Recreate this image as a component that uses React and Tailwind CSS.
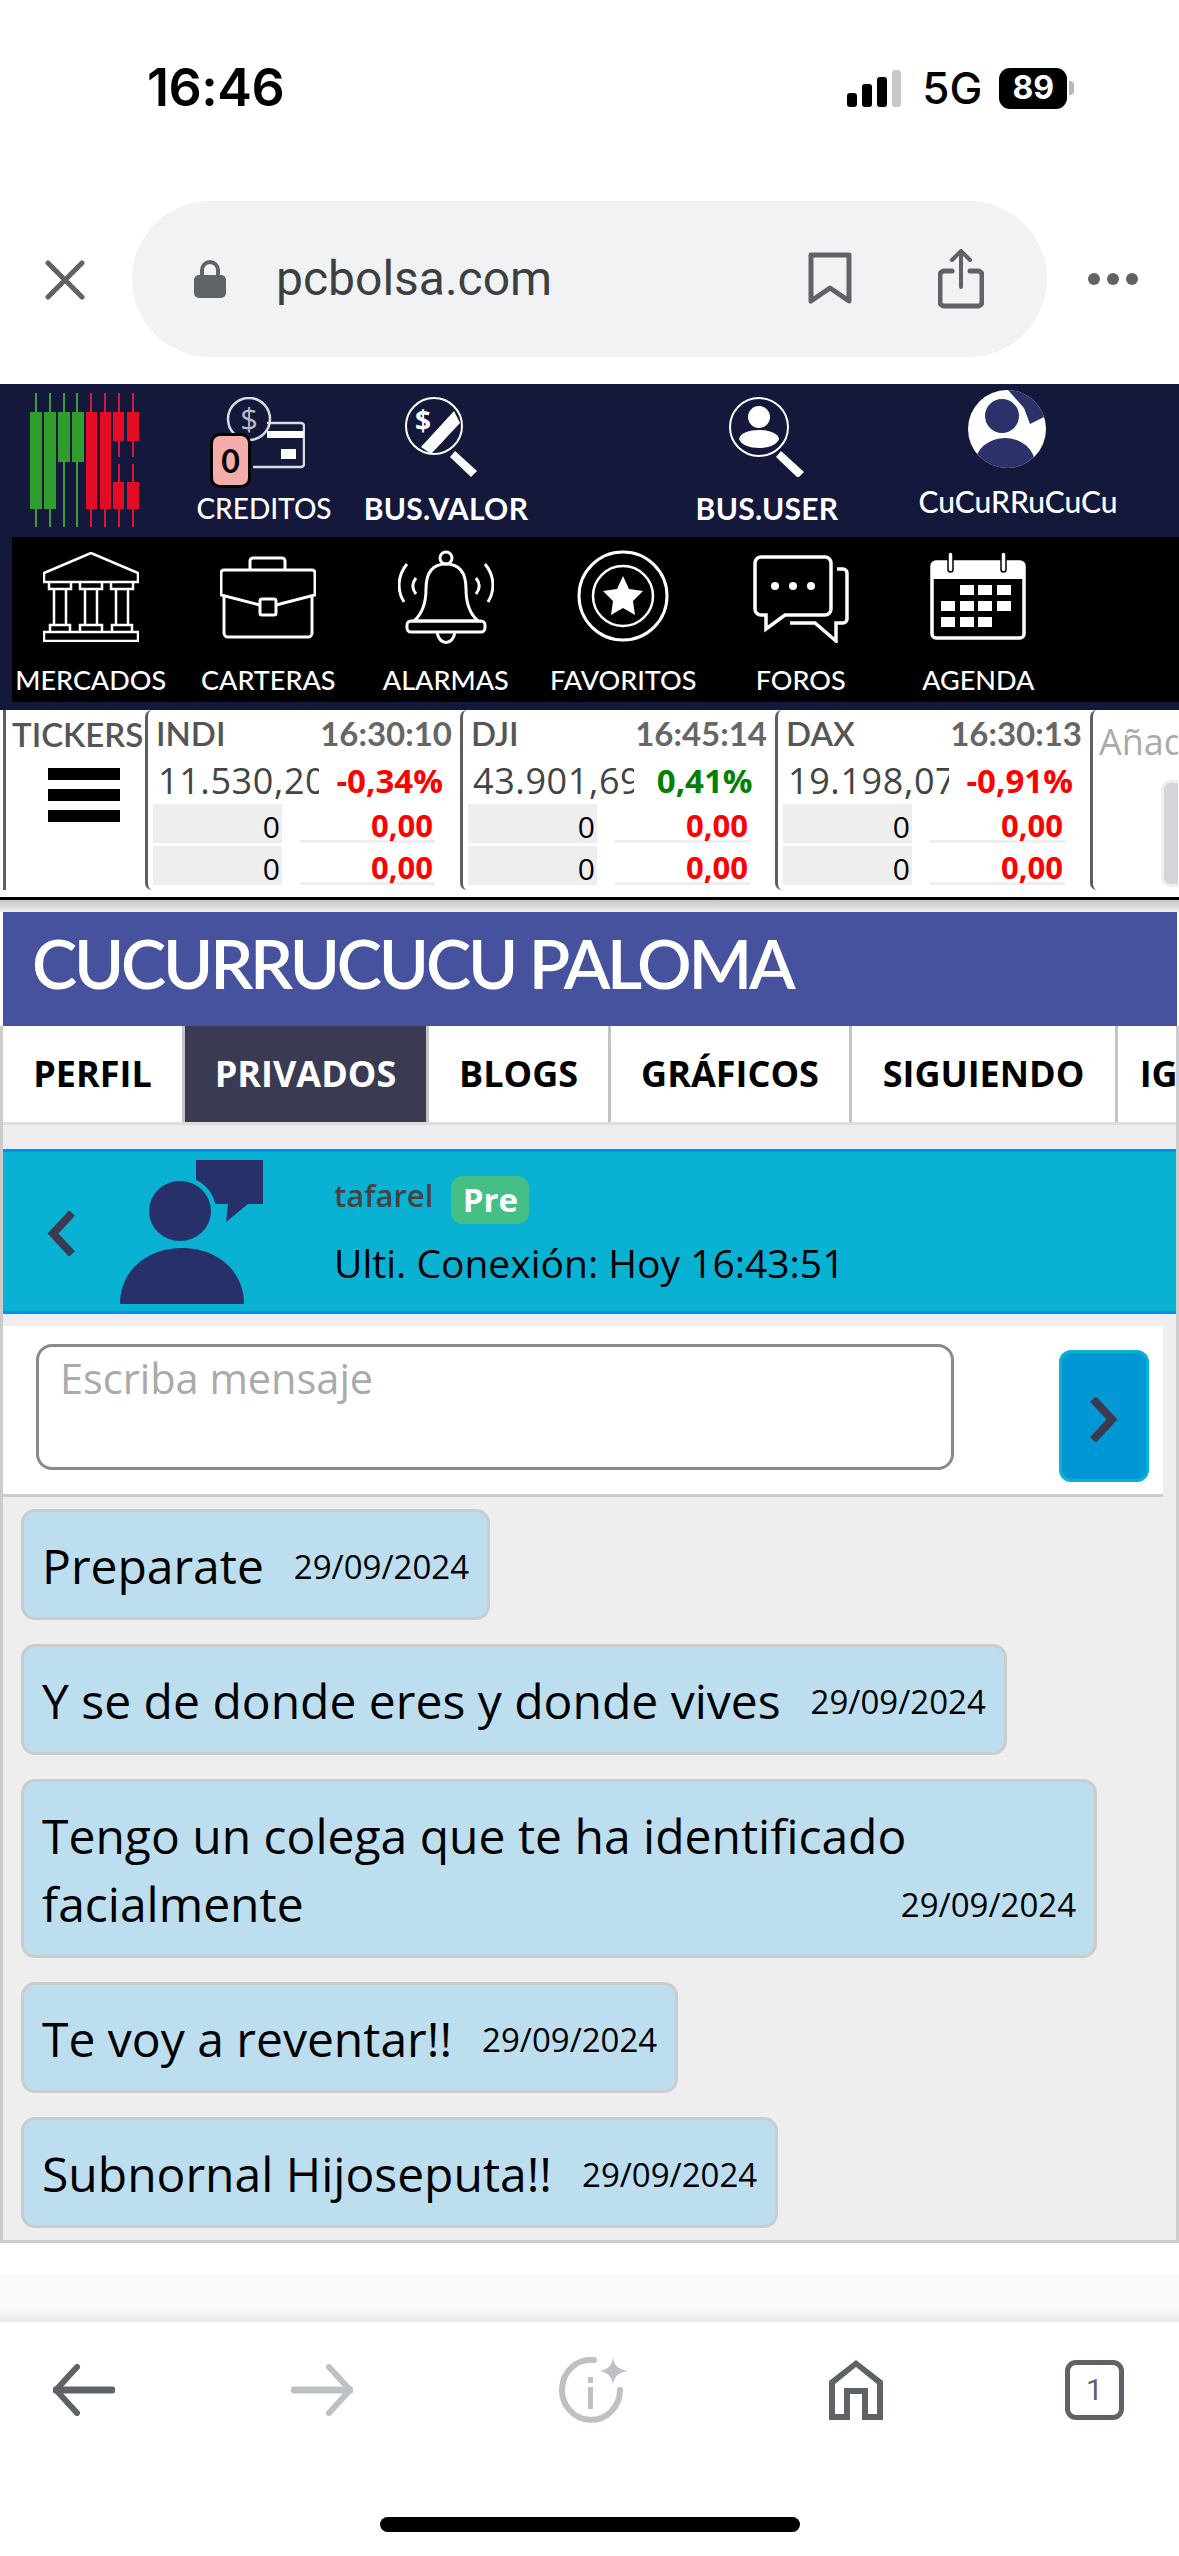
import React from 'react';

const open = "font-['Open_Sans',sans-serif]";
const lato = "font-['Lato',sans-serif]";

const Logo = () => (
  <svg width="109" height="134" viewBox="0 0 109 134" className="shrink-0">
    {[6, 20, 34, 47].map((x) => <rect key={x} x={x - 1} y="0" width="2" height="134" fill="#3f9a3f" />)}
    {[61, 75, 89, 103].map((x) => <rect key={x} x={x - 1} y="0" width="2" height="134" fill="#d8153a" />)}
    <rect x="0" y="19" width="12" height="97" fill="#2f9e2f" />
    <rect x="14" y="19" width="12" height="97" fill="#2f9e2f" />
    <rect x="28" y="19" width="12" height="50" fill="#2f9e2f" />
    <rect x="42" y="19" width="12" height="50" fill="#2f9e2f" />
    <rect x="56" y="19" width="11" height="97" fill="#e40b24" />
    <rect x="70" y="19" width="11" height="97" fill="#e40b24" />
    <rect x="83" y="19" width="11" height="29" fill="#e40b24" />
    <rect x="97" y="19" width="12" height="29" fill="#e40b24" />
    <rect x="83" y="64" width="26" height="7" fill="#14183a" />
    <rect x="83" y="89" width="11" height="27" fill="#e40b24" />
    <rect x="97" y="89" width="12" height="27" fill="#e40b24" />
  </svg>
);

const CreditIcon = () => (
  <div className="relative w-[82px] h-[90px]">
    <svg width="82" height="90" viewBox="0 0 82 90" fill="none" stroke="#d9dbe2" strokeWidth="2.5">
      <circle cx="26" cy="22" r="21" />
      <text x="26" y="33" textAnchor="middle" fill="#b9bcc8" stroke="none" fontSize="31" fontFamily="Open Sans">$</text>
      <path d="M44 26H78a3 3 0 0 1 3 3V67a3 3 0 0 1-3 3H30" />
      <rect x="44" y="34" width="37" height="7" fill="#fff" stroke="none" />
      <rect x="58" y="52" width="15" height="10" fill="#fff" stroke="none" />
    </svg>
    <div className={`absolute left-[-13px] top-[36px] w-[41px] h-[55px] rounded-[10px] border-[3px] border-black bg-[#f4acac] text-black font-bold text-[32px] flex items-center justify-center ${lato}`}>0</div>
  </div>
);

const ValorIcon = () => (
  <svg width="76" height="80" viewBox="0 0 76 80" fill="none">
    <circle cx="29" cy="29" r="28" stroke="#fff" strokeWidth="2" />
    <path d="M16 50 L49 14 L55 26 L26 57 Z" fill="#fff" />
    <path d="M50 54 L72 74 L66 80 L45 60 Z" fill="#fff" />
    <text x="18" y="34" textAnchor="middle" fill="#fff" fontSize="28" fontWeight="700" fontFamily="Open Sans">$</text>
  </svg>
);

const UserSearchIcon = () => (
  <svg width="76" height="80" viewBox="0 0 76 80" fill="none">
    <circle cx="30" cy="30" r="29" stroke="#fff" strokeWidth="2" />
    <circle cx="30" cy="20" r="11" fill="#fff" />
    <path d="M10 42 C12 30 48 30 50 42 C46 54 14 54 10 42 Z" fill="#fff" />
    <path d="M52 54 L75 75 L69 81 L47 60 Z" fill="#fff" />
  </svg>
);

const ProfileBubble = () => (
  <svg width="78" height="78" viewBox="0 0 78 78">
    <defs>
      <clipPath id="round"><ellipse cx="39" cy="39" rx="39" ry="39" /></clipPath>
    </defs>
    <g clipPath="url(#round)">
      <rect width="78" height="78" fill="#fff" />
      <path d="M40 0H78V26L62 34L56 18Z" fill="#2b3269" />
      <circle cx="34" cy="26" r="17" fill="#2b3269" />
      <ellipse cx="37" cy="74" rx="30" ry="26" fill="#2b3269" />
    </g>
  </svg>
);

const Mercados = () => (
  <svg width="96" height="90" viewBox="0 0 96 90" fill="none" stroke="#fff" strokeWidth="2.5">
    <path d="M48 1 L95 21 V30 H1 V21 Z" />
    <path d="M6 30V37H28V30M37 30V37H59V30M68 30V37H90V30" />
    <path d="M11 37V73M23 37V73M42 37V73M54 37V73M73 37V73M85 37V73" />
    <path d="M7 80V73H27V80M37 80V73H59V80M69 80V73H89V80" />
    <rect x="1" y="80" width="94" height="9" />
  </svg>
);

const Carteras = () => (
  <svg width="96" height="84" viewBox="0 0 96 84" fill="none" stroke="#fff" strokeWidth="3">
    <path d="M30 15V6a3 3 0 0 1 3-3H62a3 3 0 0 1 3 3V15" />
    <path d="M4 15H92a3 3 0 0 1 3 3V40L56 50M40 50L1 40V18a3 3 0 0 1 3-3" />
    <rect x="40" y="44" width="16" height="16" rx="2" />
    <path d="M4 42V78a4 4 0 0 0 4 4H88a4 4 0 0 0 4-4V42" />
  </svg>
);

const Alarmas = () => (
  <svg width="96" height="96" viewBox="0 0 96 96" fill="none" stroke="#fff" strokeWidth="3">
    <circle cx="48" cy="9" r="6" />
    <path d="M48 15C30 15 28 30 28 40C28 55 24 65 16 72H80C72 65 68 55 68 40C68 30 66 15 48 15Z" />
    <rect x="9" y="72" width="78" height="11" rx="4" />
    <path d="M39 83C41 97 55 97 57 83" />
    <path d="M9 15C-1 27 -1 42 6 53M18 29C14 34 14 40 18 45M87 15C97 27 97 42 90 53M78 29C82 34 82 40 78 45" />
  </svg>
);

const Favoritos = () => (
  <svg width="92" height="92" viewBox="0 0 92 92" fill="none" stroke="#fff">
    <circle cx="46" cy="46" r="44" strokeWidth="3" />
    <circle cx="46" cy="46" r="30" strokeWidth="2.5" />
    <path d="M46 26 L52 39 L66 41 L56 51 L58 65 L46 58 L34 65 L36 51 L26 41 L40 39 Z" fill="#fff" stroke="none" />
  </svg>
);

const Foros = () => (
  <svg width="96" height="88" viewBox="0 0 96 88" fill="none" stroke="#fff" strokeWidth="3.5">
    <path d="M8 2H72a6 6 0 0 1 6 6V54a6 6 0 0 1-6 6H32L13 74V60H8a6 6 0 0 1-6-6V8a6 6 0 0 1 6-6Z" />
    <path d="M84 14H90a4 4 0 0 1 4 4V64a4 4 0 0 1-4 4H83V86L62 68H37" />
    <circle cx="22" cy="31" r="4" fill="#fff" stroke="none" />
    <circle cx="40" cy="31" r="4" fill="#fff" stroke="none" />
    <circle cx="58" cy="31" r="4" fill="#fff" stroke="none" />
  </svg>
);

const Agenda = () => (
  <svg width="96" height="88" viewBox="0 0 96 88" fill="none">
    <rect x="2" y="10" width="92" height="76" rx="4" stroke="#fff" strokeWidth="3.5" />
    <rect x="2" y="10" width="92" height="17" fill="#fff" />
    <rect x="18" y="0" width="5" height="20" rx="2.5" fill="#fff" stroke="#000" strokeWidth="1.5" />
    <rect x="71" y="0" width="5" height="20" rx="2.5" fill="#fff" stroke="#000" strokeWidth="1.5" />
    {[30, 48, 67].map((x) => <rect key={x} x={x + 0} y="33" width="14" height="10" fill="#fff" />)}
    {[11, 30, 48, 67].map((x) => <rect key={x} x={x} y="49" width="14" height="10" fill="#fff" />)}
    {[11, 30, 48].map((x) => <rect key={x} x={x} y="65" width="14" height="10" fill="#fff" />)}
  </svg>
);

const ChatAvatar = () => (
  <svg width="143" height="144" viewBox="0 0 143 144" className="shrink-0">
    <path d="M76 0H143V44H128L106 62L108 44H76Z" fill="#283069" />
    <ellipse cx="60" cy="51" rx="36" ry="35" fill="#09b2d2" />
    <ellipse cx="60" cy="51" rx="31" ry="30" fill="#283069" />
    <path d="M0 144C0 110 28 88 62 88C96 88 124 110 124 144Z" fill="#283069" />
  </svg>
);

const StatusBar = () => (
  <div className="h-[201px] shrink-0">
    <div className="flex items-center h-[118px] pt-[58px] pl-[147px]">
      <span className="text-[52px] font-semibold text-black font-['Inter',sans-serif] tracking-[-0.5px] leading-none">16:46</span>
      <div className="ml-[563px] flex items-end gap-[5px] h-[37px] w-[59px]">
        <span className="w-[10px] h-[14px] rounded-[3px] bg-black" />
        <span className="w-[10px] h-[23px] rounded-[3px] bg-black" />
        <span className="w-[10px] h-[30px] rounded-[3px] bg-black" />
        <span className="w-[9px] h-[37px] rounded-[3px] bg-[#c8c8c8]" />
      </div>
      <span className="ml-[16px] text-[44px] font-medium text-black font-['Inter',sans-serif] leading-none">5G</span>
      <div className="ml-[17px] flex items-center">
        <div className="w-[68px] h-[41px] rounded-[11px] bg-black flex items-center justify-center text-white font-bold text-[32px] font-['Inter',sans-serif] leading-none">89</div>
        <span className="w-[5px] h-[14px] ml-[2px] rounded-r-[4px] bg-[#b8b8b8]" />
      </div>
    </div>
  </div>
);

const UrlBar = () => (
  <div className="flex items-start h-[183px] shrink-0">
    <svg width="40" height="40" viewBox="0 0 40 40" className="ml-[45px] mt-[59px] shrink-0" stroke="#5f6368" strokeWidth="5" strokeLinecap="round">
      <path d="M3 3L37 37M37 3L3 37" />
    </svg>
    <div className="ml-[47px] w-[915px] h-[156px] rounded-full bg-[#f1f2f4] flex items-center shrink-0">
      <svg width="32" height="38" viewBox="0 0 32 38" className="ml-[62px] shrink-0">
        <path d="M8 17V10a8 8 0 0 1 16 0V17" fill="none" stroke="#5f6368" strokeWidth="4" />
        <rect x="0" y="15" width="32" height="23" rx="5" fill="#5f6368" />
      </svg>
      <span className="ml-[50px] text-[48px] text-[#3c4043] font-['Roboto',sans-serif] leading-none">pcbolsa.com</span>
      <svg width="44" height="54" viewBox="0 0 44 54" className="ml-[256px] shrink-0" fill="none" stroke="#5f6368" strokeWidth="5">
        <path d="M3 3H41V49L22 36L3 49Z" strokeLinejoin="round" />
      </svg>
      <svg width="46" height="60" viewBox="0 0 46 60" className="ml-[86px] shrink-0" fill="none" stroke="#5f6368" strokeWidth="5" strokeLinecap="round">
        <path d="M14 22H6a4 4 0 0 0-4 4V53a4 4 0 0 0 4 4H40a4 4 0 0 0 4-4V26a4 4 0 0 0-4-4H32" />
        <path d="M23 38V3M14 11L23 2L32 11" strokeWidth="4" />
      </svg>
    </div>
    <div className="ml-[41px] mt-[72px] flex gap-[7px]">
      <span className="w-[12px] h-[12px] rounded-full bg-[#5f6368]" />
      <span className="w-[12px] h-[12px] rounded-full bg-[#5f6368]" />
      <span className="w-[12px] h-[12px] rounded-full bg-[#5f6368]" />
    </div>
  </div>
);

const TopNav = () => (
  <div className={`bg-[#14183a] h-[153px] flex items-start shrink-0 ${lato}`}>
    <div className="ml-[30px] mt-[9px] shrink-0"><Logo /></div>
    <div className="ml-[40px] w-[170px] shrink-0 flex flex-col items-center pt-[13px]">
      <div className="h-[95px]"><CreditIcon /></div>
      <span className="text-[28px] leading-[32px] text-white font-medium">CREDITOS</span>
    </div>
    <div className="ml-[12px] w-[170px] shrink-0 flex flex-col items-center pt-[13px]">
      <div className="h-[95px] pr-[6px]"><ValorIcon /></div>
      <span className="text-[30px] leading-[32px] text-white font-bold tracking-[0.3px]">BUS.VALOR</span>
    </div>
    <div className="ml-[151px] w-[170px] shrink-0 flex flex-col items-center pt-[13px]">
      <div className="h-[95px]"><UserSearchIcon /></div>
      <span className="text-[30px] leading-[32px] text-white font-bold tracking-[0.3px]">BUS.USER</span>
    </div>
    <div className="ml-[56px] w-[220px] shrink-0 flex flex-col items-center pt-[5px]">
      <div className="h-[96px] pr-[22px] pt-[1px]"><ProfileBubble /></div>
      <span className="text-[30px] leading-[32px] text-white font-medium">CuCuRRuCuCu</span>
    </div>
  </div>
);

const menuItems = [
  { label: 'MERCADOS', Icon: Mercados, top: 'pt-[15px]' },
  { label: 'CARTERAS', Icon: Carteras, top: 'pt-[18px]' },
  { label: 'ALARMAS', Icon: Alarmas, top: 'pt-[12px]' },
  { label: 'FAVORITOS', Icon: Favoritos, top: 'pt-[13px]' },
  { label: 'FOROS', Icon: Foros, top: 'pt-[18px]' },
  { label: 'AGENDA', Icon: Agenda, top: 'pt-[15px]' },
];

const MainMenu = () => (
  <div className="bg-[#14183a] h-[173px] pl-[12px] pb-[8px] shrink-0">
    <div className={`bg-black h-[165px] flex overflow-hidden ${lato}`}>
      <div className="flex -ml-[10px]">
        {menuItems.map(({ label, Icon, top }) => (
          <div key={label} className="w-[177.5px] relative flex justify-center shrink-0">
            <div className={top}><Icon /></div>
            <span className="absolute left-0 right-0 top-[127px] text-center text-[27px] leading-[32px] text-white font-medium">{label}</span>
          </div>
        ))}
      </div>
    </div>
  </div>
);

const tickers = [
  { name: 'INDI', time: '16:30:10', price: '11.530,20', pct: '-0,34%', up: false },
  { name: 'DJI', time: '16:45:14', price: '43.901,69', pct: '0,41%', up: true },
  { name: 'DAX', time: '16:30:13', price: '19.198,07', pct: '-0,91%', up: false },
];

const TickerRow = () => (
  <div className="h-[39px] flex mb-[3px]">
    <div className="ml-[5px] w-[129px] bg-[#eeeeee] text-right text-[30px] leading-[45px] pr-[2px] text-black">0</div>
    <div className="ml-[18px] w-[135px] border-b-[3px] border-[#eeeeee] text-right text-[31px] leading-[42px] pr-[2px] font-bold text-[#ff0000]">0,00</div>
  </div>
);

const TickerCard = ({ name, time, price, pct, up }) => (
  <div className={`w-[315px] h-[180px] shrink-0 border-l-[3px] border-[#5f5f5f] rounded-l-[7px] ${open}`}>
    <div className="h-[48px] flex justify-between items-center pl-[8px] pr-[8px]">
      <span className={`text-[33px] font-semibold text-[#555] ${lato}`}>{name}</span>
      <span className={`text-[33px] font-bold text-[#666] ${lato}`}>{time}</span>
    </div>
    <div className="h-[46px] flex items-center">
      <div className="ml-[10px] w-[163px] overflow-hidden whitespace-nowrap text-[36px] tracking-[0.6px] text-[#444] leading-[44px]">{price}</div>
      <div className={`w-[142px] text-center text-[33px] font-bold leading-[44px] ${up ? 'text-[#008000]' : 'text-[#ff0000]'}`}>{pct}</div>
    </div>
    <TickerRow />
    <TickerRow />
  </div>
);

const Tickers = () => (
  <div className="h-[190px] bg-white border-b-[3px] border-black flex overflow-hidden shrink-0">
    <div className={`ml-[3px] w-[142px] h-[180px] shrink-0 border-l-[3px] border-[#5f5f5f] ${lato}`}>
      <div className="pl-[6px] pt-[4px] text-[33px] leading-[40px] font-semibold text-[#555] whitespace-nowrap">TICKERS</div>
      <div className="ml-[42px] mt-[14px] w-[72px] flex flex-col gap-[9px]">
        <span className="h-[12px] bg-black" />
        <span className="h-[12px] bg-black" />
        <span className="h-[12px] bg-black" />
      </div>
    </div>
    {tickers.map((t) => <TickerCard key={t.name} {...t} />)}
    <div className="h-[180px] shrink-0 border-l-[3px] border-[#5f5f5f] rounded-l-[7px] w-[88px] overflow-hidden">
      <div className={`pl-[6px] pt-[10px] text-[36px] leading-[44px] text-[#aaaaaa] whitespace-nowrap ${open}`}>Añadir</div>
      <div className="ml-[68px] mt-[16px] w-[40px] h-[107px] rounded-[10px] bg-[#d4d5da] border-[3px] border-[#eeeeee]" />
    </div>
  </div>
);

const tabs = [
  { label: 'PERFIL', width: 'w-[182px]' },
  { label: 'PRIVADOS', width: 'w-[244px]', active: true },
  { label: 'BLOGS', width: 'w-[182px]' },
  { label: 'GRÁFICOS', width: 'w-[241px]' },
  { label: 'SIGUIENDO', width: 'w-[266px]' },
  { label: 'IGNORADOS', width: 'w-[266px]' },
];

const Tabs = () => (
  <div className="h-[99px] flex overflow-hidden border-b-[3px] border-[#dddddd] bg-white shrink-0">
    {tabs.map((t) => (
      <div
        key={t.label}
        className={`${t.width} shrink-0 h-full flex items-center justify-center border-r-[3px] border-[#c4c4c4] text-[36px] font-bold whitespace-nowrap ${open} ${t.active ? 'bg-[#3a3a52] text-white' : 'text-black'}`}
      >
        {t.label}
      </div>
    ))}
  </div>
);

const ChatHeader = () => (
  <div className="h-[165px] bg-[#09b2d2] border-y-[3px] border-[#0090f8] flex items-center shrink-0">
    <svg width="28" height="45" viewBox="0 0 28 45" className="ml-[44px] mt-[3px] shrink-0" fill="none" stroke="#3a3a52" strokeWidth="8">
      <path d="M25 2L6 22.5L25 43" />
    </svg>
    <div className="ml-[45px]"><ChatAvatar /></div>
    <div className={`ml-[71px] flex flex-col ${open}`}>
      <div className="flex items-center h-[48px]">
        <span className="text-[31px] font-semibold text-[#444] -mt-[8px]">tafarel</span>
        <span className="ml-[18px] w-[78px] h-[48px] rounded-[12px] bg-[#45bf85] text-white font-bold text-[33px] flex items-center justify-center">Pre</span>
      </div>
      <div className="mt-[14px] text-[39px] leading-[50px] text-black whitespace-nowrap">Ulti. Conexión: Hoy 16:43:51</div>
    </div>
  </div>
);

const MessageBox = () => (
  <div className="w-[1160px] h-[171px] bg-white border-b-[3px] border-[#cccccc] flex items-start shrink-0">
    <div className={`ml-[33px] mt-[18px] w-[918px] h-[126px] rounded-[16px] border-[3px] border-[#8a8a8e] bg-white pl-[21px] pt-[6px] text-[41.5px] leading-[50px] text-[#aaaaaa] ${open}`}>
      Escriba mensaje
    </div>
    <div className="ml-[105px] mt-[24px] w-[90px] h-[132px] rounded-[12px] bg-[#0097d4] border-[3px] border-[#09b2d2] flex items-center justify-center shrink-0">
      <svg width="28" height="45" viewBox="0 0 28 45" className="mt-[6px]" fill="none" stroke="#3a3a52" strokeWidth="8">
        <path d="M3 2L22 22.5L3 43" />
      </svg>
    </div>
  </div>
);

const messages = [
  'Preparate',
  'Y se de donde eres y donde vives',
  'Tengo un colega que te ha identificado facialmente',
  'Te voy a reventar!!',
  'Subnornal Hijoseputa!!',
];

const Bubble = ({ text }) => (
  <div className={`w-fit max-w-[1076px] bg-[#bcdeee] border-[3px] border-[#cccccc] rounded-[14px] px-[18px] pt-[20px] pb-[16px] text-black ${open}`}>
    <span className="text-[48px] leading-[68px]">{text}</span>
    <span className="float-right ml-[30px] mt-[1px] text-[33px] leading-[68px]">29/09/2024</span>
  </div>
);

const Messages = () => (
  <div className="h-[746px] border-b-[3px] border-[#cccccc] pl-[18px] pt-[12px] flex flex-col gap-[24px] shrink-0">
    {messages.map((m) => <Bubble key={m} text={m} />)}
  </div>
);

const BottomBar = () => (
  <div className="flex-1 bg-white">
    <div className="h-[31px]" />
    <div className="h-[48px] bg-gradient-to-b from-[#fafafa] from-70% to-[#e9e9e9]" />
    <div className="h-[234px]">
      <div className="flex items-center h-[136px]">
        <svg width="62" height="52" viewBox="0 0 62 52" className="ml-[53px] shrink-0" fill="none" stroke="#5f6368" strokeLinecap="round" strokeLinejoin="round">
          <path d="M3 26H59" strokeWidth="7" />
          <path d="M24 3L3 26L24 49" strokeWidth="6" />
        </svg>
        <svg width="62" height="52" viewBox="0 0 62 52" className="ml-[176px] shrink-0" fill="none" stroke="#bdc1c6" strokeLinecap="round" strokeLinejoin="round">
          <path d="M3 26H59" strokeWidth="7" />
          <path d="M38 3L59 26L38 49" strokeWidth="6" />
        </svg>
        <svg width="70" height="66" viewBox="0 0 70 66" className="ml-[205px] shrink-0" fill="none">
          <path d="M36 3A29 30 0 1 0 62 33" stroke="#bdc1c6" strokeWidth="6" strokeLinecap="round" />
          <rect x="30" y="30" width="5" height="22" fill="#bdc1c6" />
          <rect x="30" y="20" width="5" height="6" fill="#bdc1c6" />
          <path d="M55 0C56 9 60 12 70 14C60 16 56 19 55 28C54 19 50 16 42 14C50 12 54 9 55 0Z" fill="#bdc1c6" />
        </svg>
        <svg width="54" height="60" viewBox="0 0 54 60" className="ml-[201px] shrink-0" fill="#5f6368">
          <path fillRule="evenodd" d="M27 0L54 21V60H33V34H21V60H0V21ZM27 7L6 24V54H15V28H39V54H48V24Z" />
        </svg>
        <div className="ml-[182px] w-[59px] h-[60px] rounded-[11px] border-[5px] border-[#5f6368] flex items-center justify-center text-[#5f6368] text-[30px] font-['Roboto',sans-serif] leading-none shrink-0">1</div>
      </div>
      <div className="mt-[59px] mx-auto w-[420px] h-[15px] rounded-full bg-black" />
    </div>
  </div>
);

export default function App() {
  return (
    <div className="w-[1179px] h-[2556px] bg-white flex flex-col overflow-hidden">
      <StatusBar />
      <UrlBar />
      <TopNav />
      <MainMenu />
      <Tickers />
      <div className="h-[12px] bg-gradient-to-b from-[#c4c4c4] to-[#eeeeee] shrink-0" />
      <div className={`h-[114px] ml-[3px] mr-[2px] bg-[#47529e] flex items-center pl-[29px] pb-[12px] text-[68px] font-semibold tracking-[-3.2px] text-white whitespace-nowrap shrink-0 ${lato}`}>
        CUCURRUCUCU PALOMA
      </div>
      <div className="flex flex-col bg-[#eeeeee] border-x-[3px] border-[#cccccc] shrink-0">
        <Tabs />
        <div className="h-[24px] shrink-0" />
        <ChatHeader />
        <div className="h-[12px] shrink-0" />
        <MessageBox />
        <Messages />
      </div>
      <BottomBar />
    </div>
  );
}
